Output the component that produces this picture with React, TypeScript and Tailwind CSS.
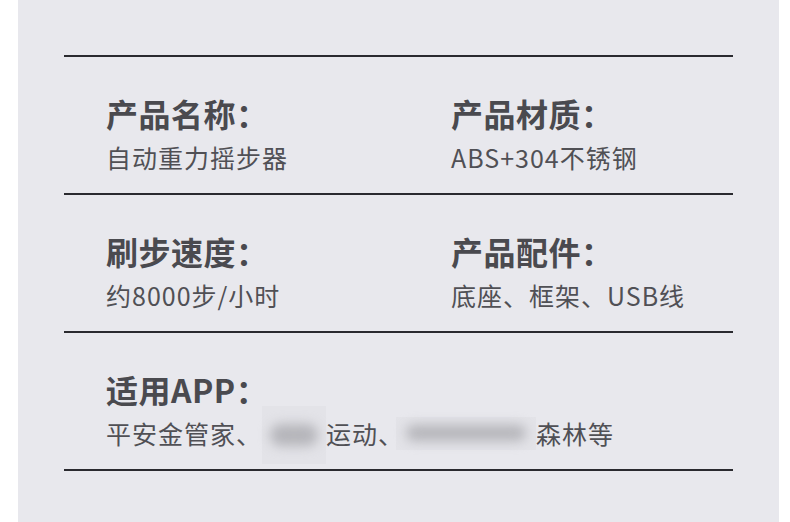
import React from 'react';

const font = { fontFamily: '"Noto Sans CJK SC", "Noto Sans", sans-serif' };

interface SpecProps {
  title: string;
  value: React.ReactNode;
}

const Spec: React.FC<SpecProps> = ({ title, value }) => (
  <div className="flex flex-col">
    <div className="text-[32px] leading-[36px] font-bold text-[#4a4a4f] tracking-[0.5px]">{title}</div>
    <div className="mt-[10px] text-[25px] leading-[32px] tracking-[1px] text-[#505055]">{value}</div>
  </div>
);

const Blurred: React.FC<{ w: string; h: string; blob: string; className?: string }> = ({ w, h, blob, className }) => (
  <span className={`relative inline-flex shrink-0 items-center justify-center bg-[#e3e3e8] ${w} ${h} ${className ?? ''}`}>
    <span className={`block rounded-full bg-[#b5b5ba] blur-[6px] ${blob}`} />
  </span>
);

export default function App() {
  return (
    <div className="w-[790px] h-[522px] bg-white flex" style={font}>
      <div className="ml-[18px] w-[761px] h-full bg-[#e8e8ed] pt-[55px] pl-[46px]">
        <div className="w-[669px] border-t-2 border-[#2a2a2f]">
          <div className="grid grid-cols-[345px_1fr] pl-[42px] pt-[38px] pb-[20px] border-b-2 border-[#2a2a2f]">
            <Spec title="产品名称：" value="自动重力摇步器" />
            <Spec title="产品材质：" value="ABS+304不锈钢" />
          </div>
          <div className="grid grid-cols-[345px_1fr] pl-[42px] pt-[38px] pb-[20px] border-b-2 border-[#2a2a2f]">
            <Spec title="刷步速度：" value="约8000步/小时" />
            <Spec title="产品配件：" value="底座、框架、USB线" />
          </div>
          <div className="pl-[42px] pt-[38px] pb-[20px] border-b-2 border-[#2a2a2f]">
            <div className="text-[32px] leading-[36px] font-bold text-[#4a4a4f] tracking-[0.5px]">适用APP：</div>
            <div className="mt-[10px] h-[32px] flex items-center text-[25px] leading-[32px] tracking-[1px] text-[#505055] whitespace-nowrap">
              <span>平安金管家、</span>
              <Blurred w="w-[64px]" h="h-[58px]" blob="w-[48px] h-[22px]" className="mt-[4px]" />
              <span>运动、</span>
              <Blurred w="w-[140px]" h="h-[33px]" blob="w-[120px] h-[16px]" className="-ml-[8px]" />
              <span>森林等</span>
            </div>
          </div>
        </div>
      </div>
    </div>
  );
}
